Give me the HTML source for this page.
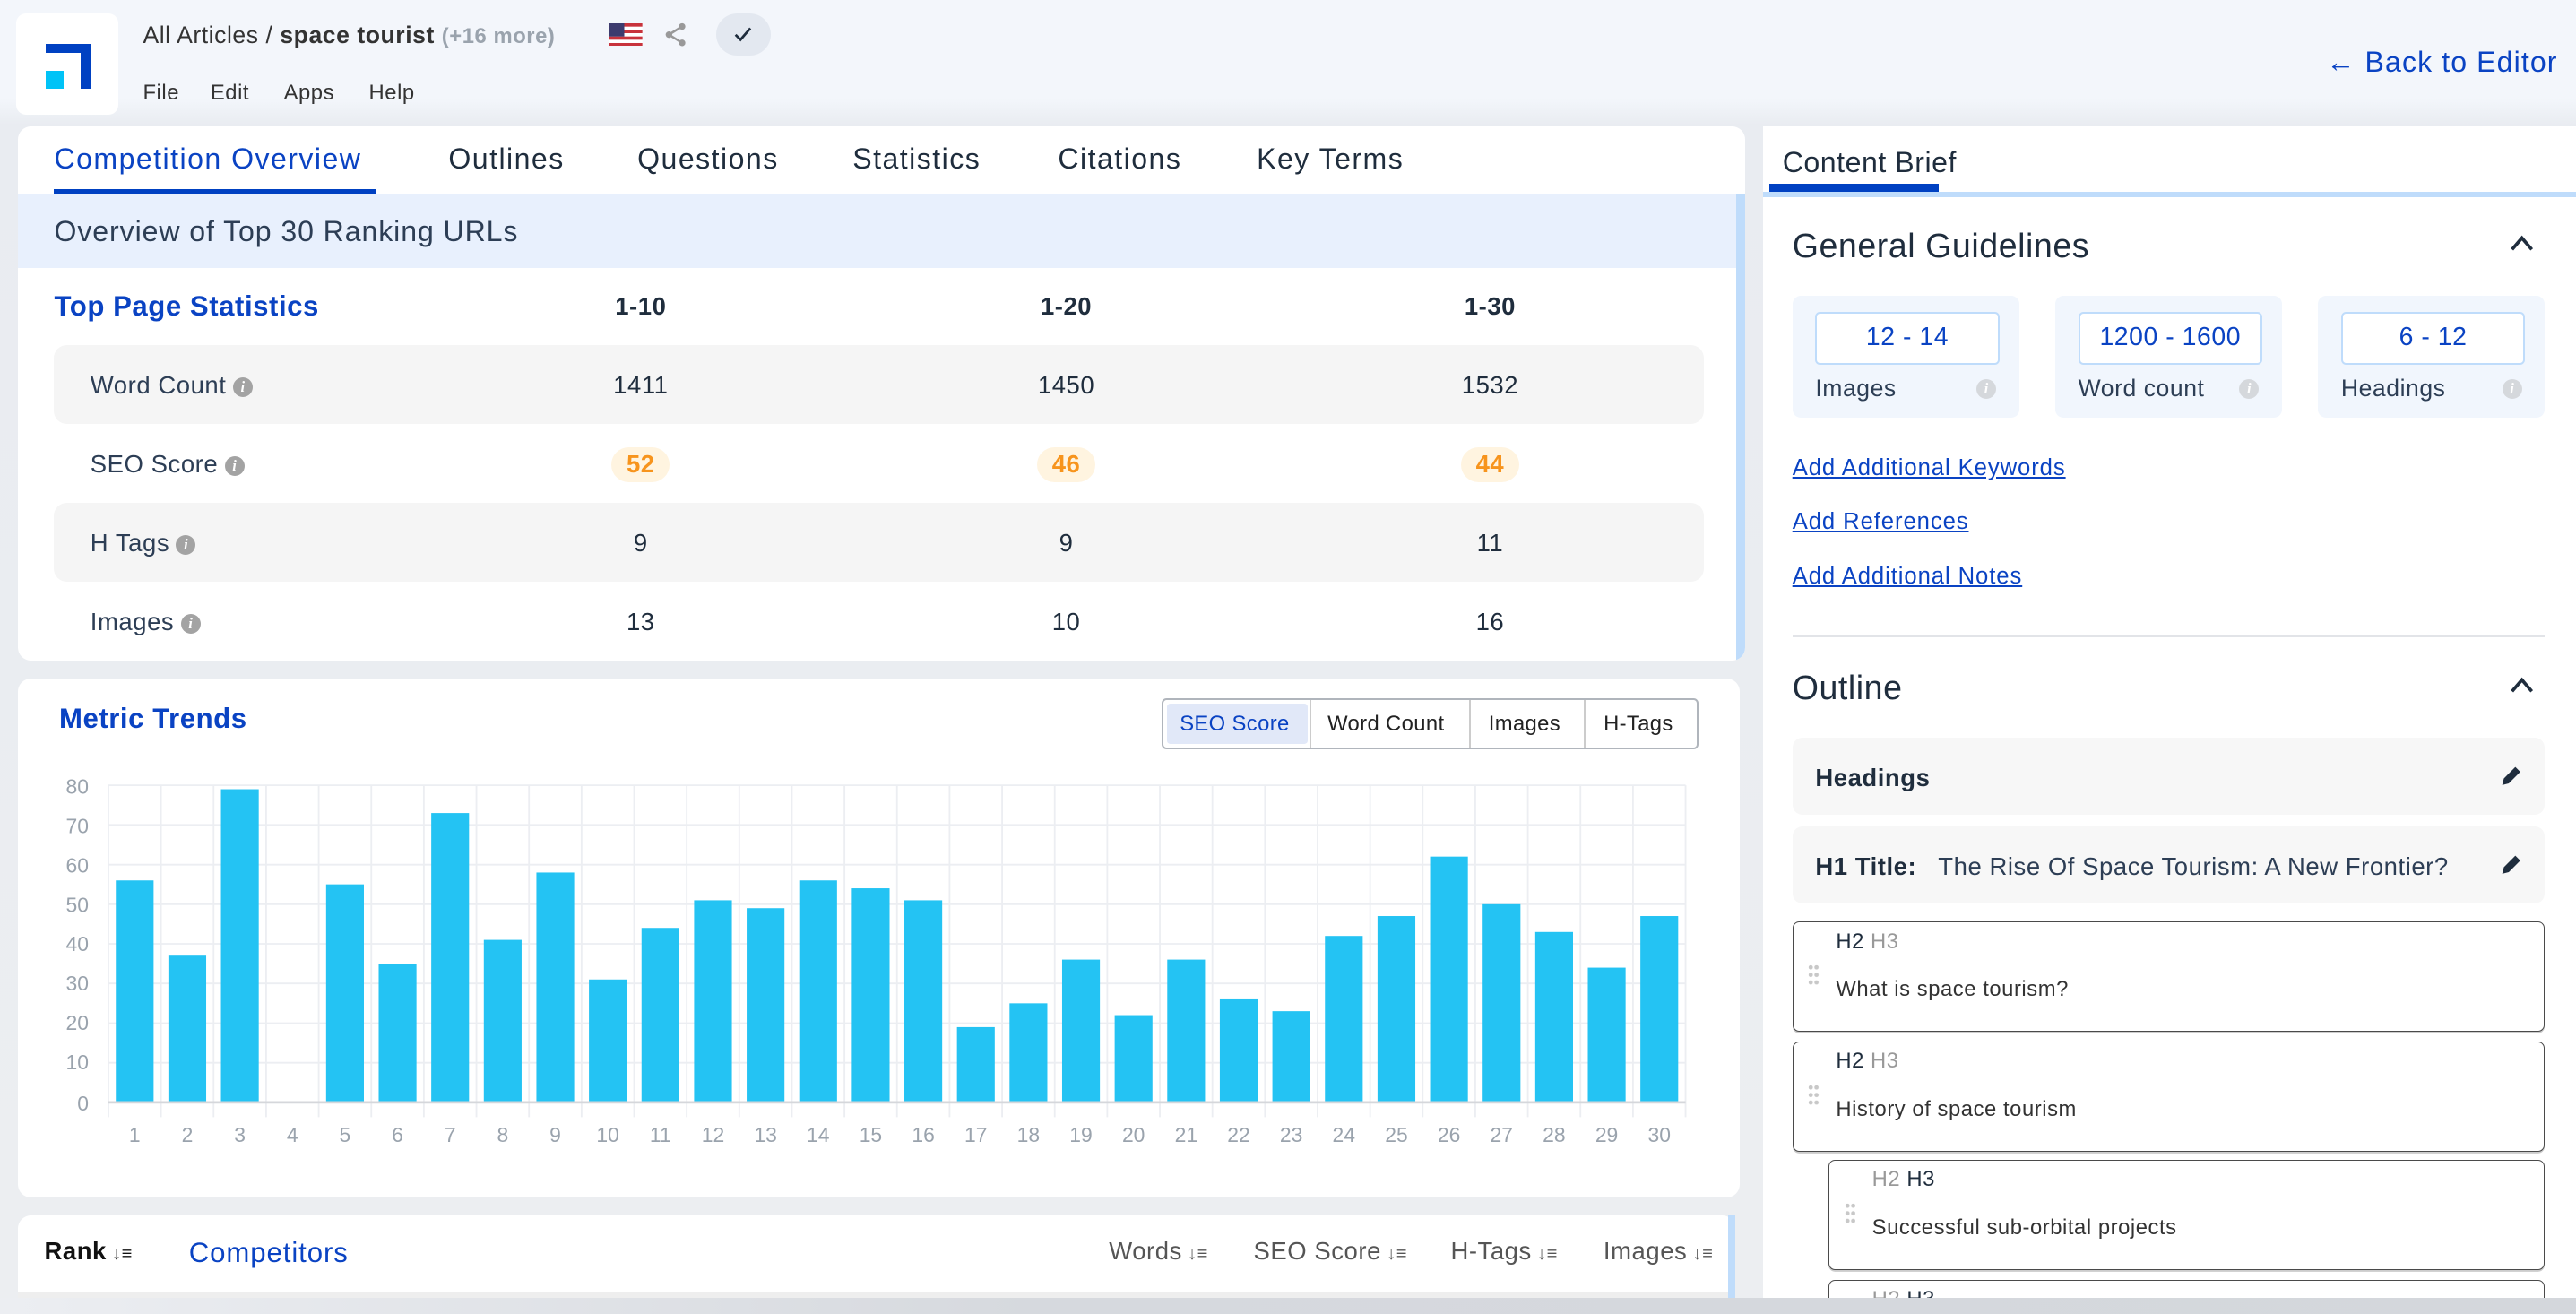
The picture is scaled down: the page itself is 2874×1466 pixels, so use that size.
<!DOCTYPE html>
<html><head><meta charset="utf-8">
<style>
*{box-sizing:border-box;margin:0;padding:0}
html,body{width:2874px;height:1466px;overflow:hidden}
body{background:#f3f6fb;font-family:"Liberation Sans",sans-serif;color:#2b3a4f;letter-spacing:0.3px}
#root{position:absolute;left:0;top:0;width:1568px;height:800px;overflow:hidden;zoom:1.8329;background:linear-gradient(#f3f6fb 0,#f3f6fb 60px,#e9ecf1 76px,#eceef1 100%)}
.a{position:absolute}
.card{position:absolute;background:#fff;border-radius:8px}
.tab{position:absolute;top:87px;font-size:17.5px;color:#1f2d3d;letter-spacing:0.8px}
.row{position:absolute;left:33px;width:1004px;height:48px;border-radius:8px}
.lbl{position:absolute;left:22px;font-size:15px;color:#2d3e55}
.num{position:absolute;font-size:15px;color:#1f2d3d;width:80px;text-align:center}
.info{display:inline-block;width:12px;height:12px;border-radius:50%;background:#a3a3a3;color:#fff;font-size:9px;line-height:12px;text-align:center;font-weight:bold;vertical-align:1px;margin-left:4px;font-family:"Liberation Serif",serif;font-style:italic;letter-spacing:0}
.pill{display:inline-block;background:#fff4e0;color:#f7941d;font-weight:bold;border-radius:12px;padding:2px 9px}
.gbox{position:absolute;top:180px;width:138px;height:74px;background:#f1f6fd;border-radius:5px}
.gin{position:absolute;left:14px;top:10px;width:112px;height:32px;border:1.5px solid #bfdcfb;border-radius:3px;background:#fff;text-align:center;line-height:29px;color:#0a43c3;font-size:15.5px}
.gl{position:absolute;left:14px;top:48px;font-size:14.5px;color:#2d3e55}
.gi{position:absolute;right:14px;top:51px;width:12px;height:12px;border-radius:50%;background:#d5d8dc;color:#fff;font-size:9px;line-height:12px;text-align:center;font-family:"Liberation Serif",serif;font-style:italic;font-weight:bold;letter-spacing:0}
.lnk{position:absolute;left:1091px;font-size:14px;color:#0a43c3;text-decoration:underline;letter-spacing:0.5px}
.ob{position:absolute;left:1091px;width:458px;height:47px;background:#f7f7f7;border-radius:6px}
.it{position:absolute;border:1px solid #4a4a4a;border-radius:4px;background:#fff;height:67px;box-shadow:0 1px 0 #ccc}
.it .h{position:absolute;left:26px;top:4px;font-size:13px;color:#1f2d3d}
.it .h span{color:#999}
.it .t{position:absolute;left:26px;top:33px;font-size:13px;color:#333}
.it .d{position:absolute;left:9px;top:25px;width:7px;height:14px;background-image:radial-gradient(circle,#c8c8c8 1.2px,transparent 1.4px);background-size:3.5px 4.6px}
.th{position:absolute;top:753px;font-size:15px;color:#555}
</style></head><body><div id="root">
<!-- header -->
<div class="card" style="left:10px;top:8px;width:62px;height:62px;border-radius:6px"></div>
<div class="a" style="left:28px;top:27px;width:27px;height:27px;background:#0041c2"></div>
<div class="a" style="left:28px;top:32px;width:21px;height:22px;background:#fff"></div>
<div class="a" style="left:28px;top:43px;width:11px;height:11px;background:#00c3f7"></div>
<div class="a" style="left:87px;top:13px;font-size:14.5px;color:#333">All Articles / <b style="color:#333">space tourist</b> <span style="color:#9aa3ad;font-size:13px;font-weight:bold">(+16 more)</span></div>
<svg class="a" style="left:371px;top:14px" width="20" height="14" viewBox="0 0 20 14"><rect width="20" height="14" fill="#fff"/><g fill="#c8333c"><rect y="0" width="20" height="2"/><rect y="4" width="20" height="2"/><rect y="8" width="20" height="2"/><rect y="12" width="20" height="2"/></g><rect width="9" height="8" fill="#3c3b6e"/></svg>
<svg class="a" style="left:403px;top:13px" width="16" height="16" viewBox="0 0 16 16"><circle cx="12" cy="3" r="2" fill="#999"/><circle cx="4" cy="8" r="2" fill="#999"/><circle cx="12" cy="13" r="2" fill="#999"/><path d="M12 3L4 8L12 13" stroke="#999" stroke-width="1.4" fill="none"/></svg>
<div class="a" style="left:436px;top:8px;width:33px;height:26px;border-radius:13px;background:#e3e8f0"></div>
<svg class="a" style="left:446px;top:14px" width="13" height="13" viewBox="0 0 13 13"><path d="M2 7l3 3 6-7" stroke="#1f2d3d" stroke-width="1.5" fill="none"/></svg>
<div class="a" style="left:87px;top:49px;font-size:13px;color:#333"><span>File</span><span style="margin-left:19px">Edit</span><span style="margin-left:21px">Apps</span><span style="margin-left:21px">Help</span></div>
<div class="a" style="left:1416px;top:28px;font-size:17.5px;color:#0a43c3;letter-spacing:0.6px">&#8592; Back to Editor</div>

<!-- left card 1 -->
<div class="card" style="left:11px;top:77px;width:1051px;height:325px;overflow:hidden">
 <div class="a" style="left:0;top:41px;width:1051px;height:45px;background:#e8f0fd"></div>
 <div class="a" style="left:1046px;top:41px;width:5px;height:284px;background:#bfdcfb"></div>
</div>
<div class="tab" style="left:33px;color:#0a43c3">Competition Overview</div>
<div class="a" style="left:33px;top:115px;width:196px;height:3px;background:#0041c2"></div>
<div class="tab" style="left:273px">Outlines</div>
<div class="tab" style="left:388px">Questions</div>
<div class="tab" style="left:519px">Statistics</div>
<div class="tab" style="left:644px">Citations</div>
<div class="tab" style="left:765px">Key Terms</div>
<div class="a" style="left:33px;top:131px;font-size:17.5px;color:#2d3e55;letter-spacing:0.5px">Overview of Top 30 Ranking URLs</div>
<div class="a" style="left:33px;top:177px;font-size:17px;color:#0a43c3;font-weight:bold">Top Page Statistics</div>
<div class="num" style="left:350px;top:178px;font-weight:bold">1-10</div>
<div class="num" style="left:609px;top:178px;font-weight:bold">1-20</div>
<div class="num" style="left:867px;top:178px;font-weight:bold">1-30</div>
<div class="row" style="top:210px;background:#f5f5f5"></div>
<div class="row" style="top:306px;background:#f5f5f5"></div>
<div class="lbl" style="left:55px;top:226px">Word Count<span class="info">i</span></div>
<div class="lbl" style="left:55px;top:274px">SEO Score<span class="info">i</span></div>
<div class="lbl" style="left:55px;top:322px">H Tags<span class="info">i</span></div>
<div class="lbl" style="left:55px;top:370px">Images<span class="info">i</span></div>
<div class="num" style="left:350px;top:226px">1411</div><div class="num" style="left:609px;top:226px">1450</div><div class="num" style="left:867px;top:226px">1532</div>
<div class="num" style="left:350px;top:272px"><span class="pill">52</span></div><div class="num" style="left:609px;top:272px"><span class="pill">46</span></div><div class="num" style="left:867px;top:272px"><span class="pill">44</span></div>
<div class="num" style="left:350px;top:322px">9</div><div class="num" style="left:609px;top:322px">9</div><div class="num" style="left:867px;top:322px">11</div>
<div class="num" style="left:350px;top:370px">13</div><div class="num" style="left:609px;top:370px">10</div><div class="num" style="left:867px;top:370px">16</div>

<!-- left card 2 -->
<div class="card" style="left:11px;top:413px;width:1048px;height:316px"></div>
<div class="a" style="left:36px;top:428px;font-size:17px;color:#0a43c3;font-weight:bold">Metric Trends</div>
<div class="a" style="left:707px;top:425px;width:327px;height:31px;border:1.5px solid #b0b5bc;border-radius:3px;background:#fff;font-size:13px;color:#222;letter-spacing:0.2px">
 <div class="a" style="left:2px;top:2px;width:86px;height:25px;background:#e1e8f8;border-radius:2px"></div>
 <div class="a" style="left:10px;top:7px;color:#0a43c3">SEO Score</div>
 <div class="a" style="left:89px;top:0;width:1px;height:29px;background:#ccc"></div>
 <div class="a" style="left:100px;top:7px">Word Count</div>
 <div class="a" style="left:186px;top:0;width:1px;height:29px;background:#ccc"></div>
 <div class="a" style="left:198px;top:7px">Images</div>
 <div class="a" style="left:256px;top:0;width:1px;height:29px;background:#ccc"></div>
 <div class="a" style="left:268px;top:7px">H-Tags</div>
</div>
<svg class="a" style="left:0;top:0;letter-spacing:0" width="1568" height="800" viewBox="0 0 1568 800">
<g stroke="#eceef2" stroke-width="1">
<line x1="66" y1="478" x2="1026" y2="478"/><line x1="66" y1="502.1" x2="1026" y2="502.1"/><line x1="66" y1="526.3" x2="1026" y2="526.3"/><line x1="66" y1="550.4" x2="1026" y2="550.4"/><line x1="66" y1="574.5" x2="1026" y2="574.5"/><line x1="66" y1="598.6" x2="1026" y2="598.6"/><line x1="66" y1="622.8" x2="1026" y2="622.8"/><line x1="66" y1="646.9" x2="1026" y2="646.9"/>
<line x1="66" y1="478" x2="66" y2="680"/><line x1="98" y1="478" x2="98" y2="680"/><line x1="130" y1="478" x2="130" y2="680"/><line x1="162" y1="478" x2="162" y2="680"/><line x1="194" y1="478" x2="194" y2="680"/><line x1="226" y1="478" x2="226" y2="680"/><line x1="258" y1="478" x2="258" y2="680"/><line x1="290" y1="478" x2="290" y2="680"/><line x1="322" y1="478" x2="322" y2="680"/><line x1="354" y1="478" x2="354" y2="680"/><line x1="386" y1="478" x2="386" y2="680"/><line x1="418" y1="478" x2="418" y2="680"/><line x1="450" y1="478" x2="450" y2="680"/><line x1="482" y1="478" x2="482" y2="680"/><line x1="514" y1="478" x2="514" y2="680"/><line x1="546" y1="478" x2="546" y2="680"/><line x1="578" y1="478" x2="578" y2="680"/><line x1="610" y1="478" x2="610" y2="680"/><line x1="642" y1="478" x2="642" y2="680"/><line x1="674" y1="478" x2="674" y2="680"/><line x1="706" y1="478" x2="706" y2="680"/><line x1="738" y1="478" x2="738" y2="680"/><line x1="770" y1="478" x2="770" y2="680"/><line x1="802" y1="478" x2="802" y2="680"/><line x1="834" y1="478" x2="834" y2="680"/><line x1="866" y1="478" x2="866" y2="680"/><line x1="898" y1="478" x2="898" y2="680"/><line x1="930" y1="478" x2="930" y2="680"/><line x1="962" y1="478" x2="962" y2="680"/><line x1="994" y1="478" x2="994" y2="680"/><line x1="1026" y1="478" x2="1026" y2="680"/>
</g>
<g fill="#24c3f3">
<rect x="70.5" y="535.9" width="23" height="135.1"/><rect x="102.5" y="581.7" width="23" height="89.3"/><rect x="134.5" y="480.4" width="23" height="190.6"/><rect x="198.5" y="538.3" width="23" height="132.7"/><rect x="230.5" y="586.6" width="23" height="84.4"/><rect x="262.5" y="494.9" width="23" height="176.1"/><rect x="294.5" y="572.1" width="23" height="98.9"/><rect x="326.5" y="531.1" width="23" height="139.9"/><rect x="358.5" y="596.2" width="23" height="74.8"/><rect x="390.5" y="564.8" width="23" height="106.2"/><rect x="422.5" y="548" width="23" height="123"/><rect x="454.5" y="552.8" width="23" height="118.2"/><rect x="486.5" y="535.9" width="23" height="135.1"/><rect x="518.5" y="540.7" width="23" height="130.3"/><rect x="550.5" y="548" width="23" height="123"/><rect x="582.5" y="625.2" width="23" height="45.8"/><rect x="614.5" y="610.7" width="23" height="60.3"/><rect x="646.5" y="584.1" width="23" height="86.9"/><rect x="678.5" y="617.9" width="23" height="53.1"/><rect x="710.5" y="584.1" width="23" height="86.9"/><rect x="742.5" y="608.3" width="23" height="62.7"/><rect x="774.5" y="615.5" width="23" height="55.5"/><rect x="806.5" y="569.7" width="23" height="101.3"/><rect x="838.5" y="557.6" width="23" height="113.4"/><rect x="870.5" y="521.4" width="23" height="149.6"/><rect x="902.5" y="550.4" width="23" height="120.6"/><rect x="934.5" y="567.3" width="23" height="103.7"/><rect x="966.5" y="589" width="23" height="82"/><rect x="998.5" y="557.6" width="23" height="113.4"/>
</g>
<line x1="66" y1="671" x2="1026" y2="671" stroke="#d5d7db" stroke-width="1.5"/>
<g font-family="Liberation Sans" font-size="12.5" fill="#9aa3ad" text-anchor="end">
<text x="54" y="483">80</text><text x="54" y="507">70</text><text x="54" y="531">60</text><text x="54" y="555">50</text><text x="54" y="579">40</text><text x="54" y="603">30</text><text x="54" y="627">20</text><text x="54" y="651">10</text><text x="54" y="676">0</text>
</g>
<g font-family="Liberation Sans" font-size="12.5" fill="#9aa3ad" text-anchor="middle">
<text x="82" y="695">1</text><text x="114" y="695">2</text><text x="146" y="695">3</text><text x="178" y="695">4</text><text x="210" y="695">5</text><text x="242" y="695">6</text><text x="274" y="695">7</text><text x="306" y="695">8</text><text x="338" y="695">9</text><text x="370" y="695">10</text><text x="402" y="695">11</text><text x="434" y="695">12</text><text x="466" y="695">13</text><text x="498" y="695">14</text><text x="530" y="695">15</text><text x="562" y="695">16</text><text x="594" y="695">17</text><text x="626" y="695">18</text><text x="658" y="695">19</text><text x="690" y="695">20</text><text x="722" y="695">21</text><text x="754" y="695">22</text><text x="786" y="695">23</text><text x="818" y="695">24</text><text x="850" y="695">25</text><text x="882" y="695">26</text><text x="914" y="695">27</text><text x="946" y="695">28</text><text x="978" y="695">29</text><text x="1010" y="695">30</text>
</g>
</svg>

<!-- left card 3 -->
<div class="card" style="left:11px;top:740px;width:1045px;height:50px;border-radius:8px 8px 0 0"></div>
<div class="a" style="left:11px;top:786px;width:1045px;height:4px;background:#eee"></div>
<div class="a" style="left:1052px;top:740px;width:4px;height:50px;background:#bfdcfb"></div>
<div class="th" style="left:27px;color:#111;font-weight:bold">Rank<span style="font-size:11px;font-weight:normal"> ↓≡</span></div>
<div class="a" style="left:115px;top:753px;font-size:17px;color:#0a43c3;letter-spacing:0.5px">Competitors</div>
<div class="th" style="left:675px">Words<span style="font-size:11px"> ↓≡</span></div>
<div class="th" style="left:763px">SEO Score<span style="font-size:11px"> ↓≡</span></div>
<div class="th" style="left:883px">H-Tags<span style="font-size:11px"> ↓≡</span></div>
<div class="th" style="left:976px">Images<span style="font-size:11px"> ↓≡</span></div>

<!-- right panel -->
<div class="a" style="left:1073px;top:77px;width:495px;height:713px;background:#fff"></div>
<div class="a" style="left:1085px;top:89px;font-size:17.5px;color:#1f2d3d">Content Brief</div>
<div class="a" style="left:1073px;top:117px;width:495px;height:3px;background:#bfdcfb"></div>
<div class="a" style="left:1077px;top:112px;width:103px;height:5px;background:#0041c2"></div>
<div class="a" style="left:1091px;top:138px;font-size:20.5px;color:#1f2d3d">General Guidelines</div>
<svg class="a" style="left:1527px;top:142px" width="16" height="12" viewBox="0 0 16 12"><path d="M2 10L8 3L14 10" stroke="#1f2d3d" stroke-width="2" fill="none"/></svg>
<div class="gbox" style="left:1091px"><div class="gin">12 - 14</div><div class="gl">Images</div><div class="gi">i</div></div>
<div class="gbox" style="left:1251px"><div class="gin">1200 - 1600</div><div class="gl">Word count</div><div class="gi">i</div></div>
<div class="gbox" style="left:1411px"><div class="gin">6 - 12</div><div class="gl">Headings</div><div class="gi">i</div></div>
<div class="lnk" style="top:277px">Add Additional Keywords</div>
<div class="lnk" style="top:310px">Add References</div>
<div class="lnk" style="top:343px">Add Additional Notes</div>
<div class="a" style="left:1091px;top:387px;width:458px;height:1px;background:#e2e4e8"></div>
<div class="a" style="left:1091px;top:407px;font-size:20.5px;color:#1f2d3d">Outline</div>
<svg class="a" style="left:1527px;top:411px" width="16" height="12" viewBox="0 0 16 12"><path d="M2 10L8 3L14 10" stroke="#1f2d3d" stroke-width="2" fill="none"/></svg>
<div class="ob" style="top:449px"><div class="a" style="left:14px;top:16px;font-size:15px;color:#1f2d3d;font-weight:bold">Headings</div></div>
<div class="ob" style="top:503px"><div class="a" style="left:14px;top:16px;font-size:15px;color:#1f2d3d"><b>H1 Title:</b>&nbsp;&nbsp; <span style="color:#2d3e55">The Rise Of Space Tourism: A New Frontier?</span></div></div>
<svg class="a" style="left:1521px;top:465px" width="15" height="15" viewBox="0 0 15 15"><path d="M2 13l1-4 7-7 3 3-7 7z" fill="#1f2d3d"/></svg>
<svg class="a" style="left:1521px;top:519px" width="15" height="15" viewBox="0 0 15 15"><path d="M2 13l1-4 7-7 3 3-7 7z" fill="#1f2d3d"/></svg>
<div class="it" style="left:1091px;top:561px;width:458px"><div class="h">H2 <span>H3</span></div><div class="d"></div><div class="t">What is space tourism?</div></div>
<div class="it" style="left:1091px;top:634px;width:458px"><div class="h">H2 <span>H3</span></div><div class="d"></div><div class="t">History of space tourism</div></div>
<div class="it" style="left:1113px;top:706px;width:436px"><div class="h"><span>H2</span> H3</div><div class="d"></div><div class="t">Successful sub-orbital projects</div></div>
<div class="it" style="left:1113px;top:779px;width:436px;height:30px;overflow:hidden"><div class="h"><span>H2</span> H3</div></div>

<!-- bottom strip -->
<div class="a" style="left:0;top:790px;width:1568px;height:10px;z-index:5;background:linear-gradient(90deg,#eceef2,#d6d9de 40%,#d4d7dc)"></div>
</div></body></html>
